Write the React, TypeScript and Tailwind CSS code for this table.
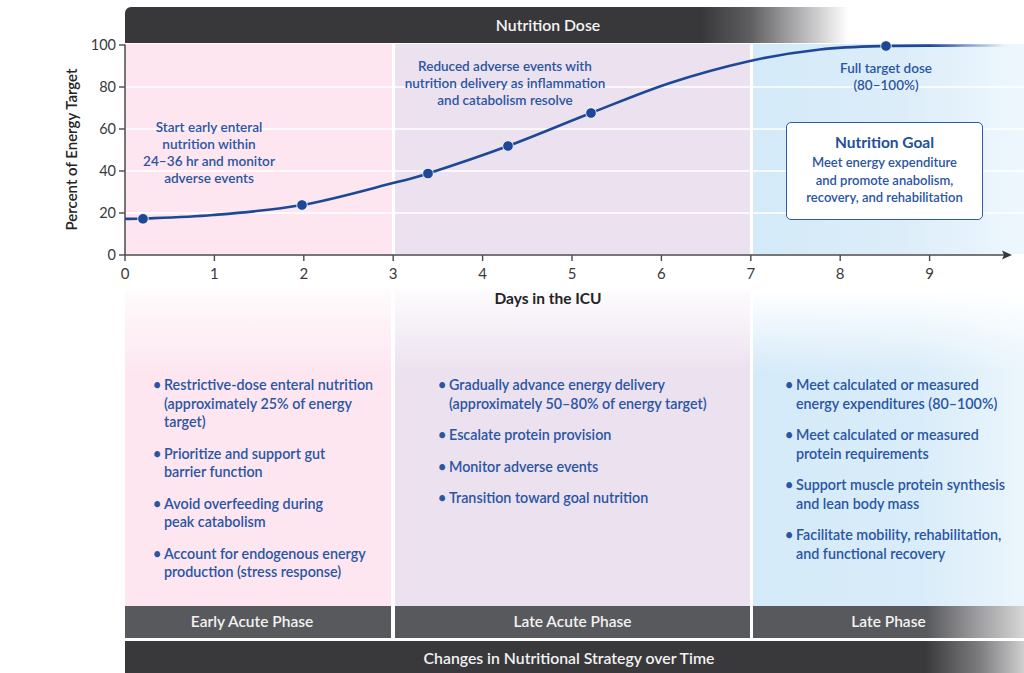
import React from "react";

const X = (d: number) => 125 + 89.4 * d;
const Y = (v: number) => 254 - 2.1 * v;

function crPath(pts: number[][]) {
  let d = `M${pts[0][0]},${pts[0][1]}`;
  for (let i = 0; i < pts.length - 1; i++) {
    const p0 = pts[i - 1] || pts[i];
    const p1 = pts[i];
    const p2 = pts[i + 1];
    const p3 = pts[i + 2] || p2;
    const c1x = p1[0] + (p2[0] - p0[0]) / 6;
    const c1y = p1[1] + (p2[1] - p0[1]) / 6;
    const c2x = p2[0] - (p3[0] - p1[0]) / 6;
    const c2y = p2[1] - (p3[1] - p1[1]) / 6;
    d += ` C${c1x.toFixed(1)},${c1y.toFixed(1)} ${c2x.toFixed(1)},${c2y.toFixed(1)} ${p2[0]},${p2[1]}`;
  }
  return d;
}

const curvePts = [
  [125, 217.8],
  [143, 217.5],
  [213, 214],
  [302, 204],
  [393, 182],
  [428, 172.5],
  [508, 145],
  [591, 112],
  [670, 82],
  [750, 60],
  [820, 48.5],
  [886, 45],
  [950, 44.6],
  [1005, 44.6],
];

const dots = [
  [143, 217.8],
  [302, 204],
  [428, 172.5],
  [508, 145],
  [591, 112],
  [886, 45],
];

function Bullet({ children }: { children: React.ReactNode }) {
  return (
    <li className="flex">
      <span className="w-[11px] shrink-0">•</span>
      <span>{children}</span>
    </li>
  );
}

export default function App() {
  return (
    <div className="relative w-[1024px] h-[673px] overflow-hidden bg-white font-['Lato',sans-serif]">
      <div className="h-[7px]" />
      {/* Top bar */}
      <div className="ml-[125px] h-[36px] rounded-tl-[6px] bg-[linear-gradient(to_right,#38383b_64%,#5e5e61_69.5%,#b8b8ba_75.5%,#ffffff_80.5%)] flex items-center justify-center pr-[53px] text-[15.8px] font-semibold text-[#f4f4f4]">
        Nutrition Dose
      </div>

      {/* Chart section */}
      <div className="relative h-[247px]">
        <div className="ml-[125px] mt-[1px] h-[210px] flex">
          <div className="w-[267px] bg-[#fde6f0]" />
          <div className="ml-[3px] w-[355px] bg-[#ece1ef]" />
          <div className="ml-[3px] flex-1 bg-[linear-gradient(to_right,#d4eaf8_0%,#dcedf9_55%,#eef7fd_100%)]" />
        </div>

        <svg
          className="absolute left-0 top-0 z-10 overflow-visible"
          width={1024}
          height={267}
          viewBox="0 43 1024 267"
        >
          <defs>
            <linearGradient id="fade" gradientUnits="userSpaceOnUse" x1="930" y1="0" x2="1005" y2="0">
              <stop offset="0" stopColor="#1d4896" stopOpacity="1" />
              <stop offset="1" stopColor="#1d4896" stopOpacity="0" />
            </linearGradient>
          </defs>
          {[20, 40, 60, 80].map((v) => (
            <line key={v} x1={125} x2={1024} y1={Y(v)} y2={Y(v)} stroke="#ffffff" strokeWidth={1.6} />
          ))}
          {/* y axis */}
          <line x1={125} x2={125} y1={43.5} y2={254} stroke="#4a4a4d" strokeWidth={1.5} />
          {[0, 20, 40, 60, 80, 100].map((v) => (
            <g key={v}>
              <line x1={119} x2={125} y1={Y(v)} y2={Y(v)} stroke="#4a4a4d" strokeWidth={1.4} />
              <text
                x={116}
                y={Y(v) + 5}
                textAnchor="end"
                fontSize={14.5}
                fill="#3a3a3c"
                fontFamily="Lato, sans-serif"
              >
                {v}
              </text>
            </g>
          ))}
          {/* x axis */}
          <line x1={125} x2={1004} y1={254} y2={254} stroke="#4a4a4d" strokeWidth={1.6} />
          <polygon points="1012,254 1002,249.5 1004,254 1002,258.5" fill="#38383b" />
          {[0, 1, 2, 3, 4, 5, 6, 7, 8, 9].map((d) => (
            <g key={d}>
              <line x1={X(d)} x2={X(d)} y1={254} y2={260} stroke="#4a4a4d" strokeWidth={1.4} />
              <text
                x={X(d)}
                y={278}
                textAnchor="middle"
                fontSize={15}
                fill="#3a3a3c"
                fontFamily="Lato, sans-serif"
              >
                {d}
              </text>
            </g>
          ))}
          <text
            x={548}
            y={302.5}
            textAnchor="middle"
            fontSize={15.5}
            fontWeight={700}
            fill="#232325"
            fontFamily="Lato, sans-serif"
          >
            Days in the ICU
          </text>
          <text
            transform="rotate(-90 72 148.5)"
            x={72}
            y={153.5}
            textAnchor="middle"
            fontSize={15}
            fontWeight={600}
            fill="#232325"
            fontFamily="Lato, sans-serif"
          >
            Percent of Energy Target
          </text>
          {/* curve */}
          <path d={crPath(curvePts)} fill="none" stroke="url(#fade)" strokeWidth={2.6} />
          {dots.map(([x, y], i) => (
            <circle key={i} cx={x} cy={y} r={5.3} fill="#1d4896" stroke="#ffffff" strokeWidth={0.8} />
          ))}
        </svg>

        {/* annotations */}
        <div className="absolute z-20 left-[124px] top-[75px] w-[170px] text-center text-[13.6px] leading-[17px] font-semibold text-[#2a55a3]">
          Start early enteral
          <br />
          nutrition within
          <br />
          24–36 hr and monitor
          <br />
          adverse events
        </div>
        <div className="absolute z-20 left-[375px] top-[14px] w-[260px] text-center text-[13.5px] leading-[17px] font-semibold text-[#2a55a3]">
          Reduced adverse events with
          <br />
          nutrition delivery as inflammation
          <br />
          and catabolism resolve
        </div>
        <div className="absolute z-20 left-[816px] top-[16px] w-[140px] text-center text-[13.5px] leading-[17px] font-semibold text-[#2a55a3]">
          Full target dose
          <br />
          (80–100%)
        </div>
        <div className="absolute z-20 left-[786px] top-[78px] w-[197px] h-[98px] rounded-[5px] border-[1.5px] border-[#2f5aa6] bg-white text-center text-[#2a55a3]">
          <div className="pt-[9px] text-[15.5px] leading-[20px] font-bold text-[#244f9d]">Nutrition Goal</div>
          <div className="mt-[2px] text-[13px] leading-[17.5px] font-semibold">
            Meet energy expenditure
            <br />
            and promote anabolism,
            <br />
            recovery, and rehabilitation
          </div>
        </div>
      </div>

      {/* Lower columns */}
      <div className="ml-[125px] h-[315px] flex text-[14.3px] leading-[18.5px] font-semibold text-[#2a55a3]">
        <div className="w-[266px] bg-[linear-gradient(to_bottom,#fefbfc_0%,#fde6f0_26%)] pl-[28px] pt-[85px]">
          <ul className="flex flex-col gap-[13px]">
            <Bullet>
              Restrictive-dose enteral nutrition
              <br />
              (approximately 25% of energy
              <br />
              target)
            </Bullet>
            <Bullet>
              Prioritize and support gut
              <br />
              barrier function
            </Bullet>
            <Bullet>
              Avoid overfeeding during
              <br />
              peak catabolism
            </Bullet>
            <Bullet>
              Account for endogenous energy
              <br />
              production (stress response)
            </Bullet>
          </ul>
        </div>
        <div className="ml-[4px] w-[355px] bg-[linear-gradient(to_bottom,#fdfbfd_0%,#ece1ef_26%)] pl-[43px] pt-[85px]">
          <ul className="flex flex-col gap-[13px]">
            <Bullet>
              Gradually advance energy delivery
              <br />
              (approximately 50–80% of energy target)
            </Bullet>
            <Bullet>Escalate protein provision</Bullet>
            <Bullet>Monitor adverse events</Bullet>
            <Bullet>Transition toward goal nutrition</Bullet>
          </ul>
        </div>
        <div className="ml-[3px] flex-1 bg-[linear-gradient(to_bottom,#ffffff_0%,rgba(255,255,255,0)_26%),linear-gradient(to_right,#d5eaf8_0%,#d8ecf9_60%,#ebf5fc_100%)] pl-[32px] pt-[85px]">
          <ul className="flex flex-col gap-[13px]">
            <Bullet>
              Meet calculated or measured
              <br />
              energy expenditures (80–100%)
            </Bullet>
            <Bullet>
              Meet calculated or measured
              <br />
              protein requirements
            </Bullet>
            <Bullet>
              Support muscle protein synthesis
              <br />
              and lean body mass
            </Bullet>
            <Bullet>
              Facilitate mobility, rehabilitation,
              <br />
              and functional recovery
            </Bullet>
          </ul>
        </div>
      </div>

      {/* Phase bars */}
      <div className="ml-[125px] h-[32px] flex text-[15.5px] font-semibold text-[#f2f2f2]">
        <div className="w-[266px] bg-[#58595c] flex items-center justify-center pr-[12px]">Early Acute Phase</div>
        <div className="ml-[4px] w-[355px] bg-[#58595c] flex items-center justify-center">Late Acute Phase</div>
        <div className="ml-[3px] flex-1 bg-[linear-gradient(to_right,#58595c_64%,#9a9a9c_82%,#d6d6d6_100%)] flex items-center justify-center">
          Late Phase
        </div>
      </div>
      <div className="h-[3px]" />
      <div className="ml-[125px] h-[33px] bg-[linear-gradient(to_right,#39393c_89%,#7c7c7e_95%,#cfcfd0_100%)] flex items-center justify-center pr-[11px] text-[15.8px] font-semibold text-[#f2f2f2]">
        Changes in Nutritional Strategy over Time
      </div>
    </div>
  );
}
